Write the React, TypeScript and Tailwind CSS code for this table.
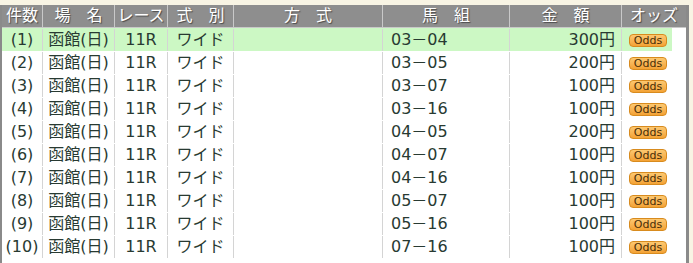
const rows = [
  ["03－04", "300円"],
  ["03－05", "200円"],
  ["03－07", "100円"],
  ["03－16", "100円"],
  ["04－05", "200円"],
  ["04－07", "100円"],
  ["04－16", "100円"],
  ["05－07", "100円"],
  ["05－16", "100円"],
  ["07－16", "100円"],
];

const font = { fontFamily: '"DejaVu Sans", "Noto Sans CJK JP", sans-serif' };

function Head({ w, label, last }: { w: string; label: string; last?: boolean }) {
  return (
    <div
      className={`${w} flex items-center justify-center text-white text-[16px] [text-shadow:1px_1px_1px_#4a4a4a] ${
        last ? "" : "border-r border-[#c9c9c9]"
      }`}
    >
      {label}
    </div>
  );
}

export default function App() {
  return (
    <div className="w-[693px] h-[263px] bg-[#f8f4e4] pt-[5px] overflow-hidden" style={font}>
      <div className="w-[689px] bg-white border-l-2 border-r-[3px] border-[#8a8a8a] h-[258px]">
        <div className="flex h-[23px] bg-[#8e8e8e] border-b border-[#c9c9c9] whitespace-pre">
          <Head w="w-[41px]" label="件数" />
          <Head w="w-[72px]" label="場　名" />
          <Head w="w-[53px]" label="レース" />
          <Head w="w-[66px]" label="式　別" />
          <Head w="w-[149px]" label="方　式" />
          <Head w="w-[127px]" label="馬　組" />
          <Head w="w-[112px]" label="金　額" />
          <Head w="flex-1" label="オッズ" last />
        </div>
        <div className="w-[670px] text-[16px] text-[#283a32]">
          {rows.map(([kumi, kin], i) => (
            <div key={i} className={`flex h-[23px] items-center pt-[1px] ${i === 0 ? "bg-[#ccf8c4]" : ""}`}>
              <div className="w-[41px] h-full flex items-center justify-center border-r border-[#d4d4d4]">
                ({i + 1})
              </div>
              <div className="w-[72px] h-full flex items-center justify-center border-r border-[#d4d4d4]">
                函館(日)
              </div>
              <div className="w-[53px] h-full flex items-center justify-center border-r border-[#d4d4d4]">
                11R
              </div>
              <div className="w-[66px] h-full flex items-center justify-center border-r border-[#d4d4d4]">
                ワイド
              </div>
              <div className="w-[149px] h-full border-r border-[#d4d4d4]" />
              <div className="w-[127px] h-full flex items-center pl-[8px] border-r border-[#d4d4d4]">
                {kumi}
              </div>
              <div className="w-[112px] h-full flex items-center justify-end pr-[6px] border-r border-[#d4d4d4]">
                {kin}
              </div>
              <div className="flex-1 h-full flex items-center pl-[7px]">
                <span
                  className="w-[38px] h-[13px] rounded-[4px] border border-[#d88b1e] bg-gradient-to-b from-[#fcc870] to-[#f3a234] text-[11px] leading-[11px] font-medium text-[#4a2e08] flex items-center justify-center"
                  style={{ fontFamily: '"DejaVu Sans", sans-serif' }}
                >
                  Odds
                </span>
              </div>
            </div>
          ))}
        </div>
      </div>
    </div>
  );
}
